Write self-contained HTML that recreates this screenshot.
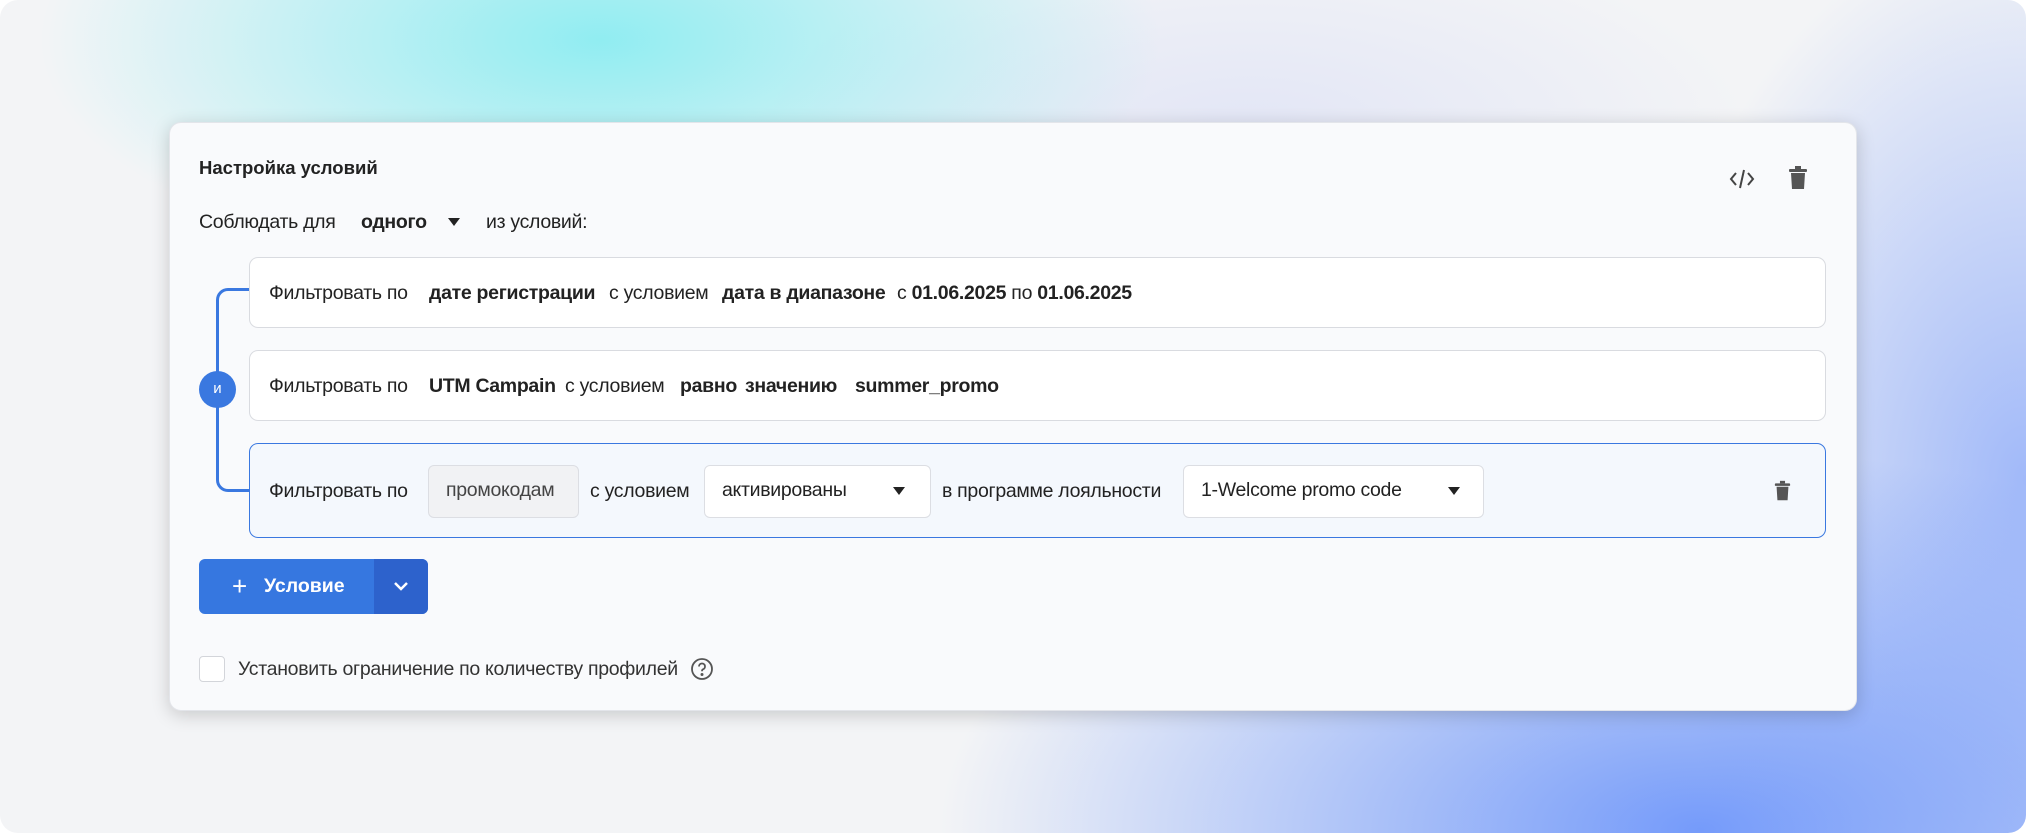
<!DOCTYPE html>
<html><head><meta charset="utf-8"><style>
*{box-sizing:border-box;margin:0;padding:0}
body{width:2026px;height:833px;overflow:hidden;background:#fff;font-family:"Liberation Sans",sans-serif;color:#222;position:relative}
.bg{position:absolute;left:0;top:0;width:2026px;height:833px;border-radius:18px;overflow:hidden;
background:
radial-gradient(ellipse 560px 240px at 600px 40px,rgba(120,235,240,.8),rgba(120,235,240,0) 100%),
radial-gradient(ellipse 760px 380px at 1700px 830px,rgba(110,150,250,.95),rgba(110,150,250,0) 100%),
radial-gradient(ellipse 380px 560px at 2026px 480px,rgba(140,170,250,.8),rgba(140,170,250,0) 100%),
radial-gradient(ellipse 500px 200px at 1250px 130px,rgba(215,220,245,.6),rgba(215,220,245,0) 100%),
#f3f4f6}
.card{position:absolute;left:169px;top:122px;width:1688px;height:589px;background:#f9fafc;border-radius:12px;box-shadow:0 4px 18px rgba(0,0,0,.18);border:1px solid #e3e5ea}
.abs{position:absolute;white-space:nowrap}
.t{font-size:19.5px;line-height:24px;letter-spacing:-0.3px}
b{font-weight:700}
.row{position:absolute;left:249px;width:1577px;background:#fff;border:1.5px solid #d9dbe0;border-radius:9px}
.box{position:absolute;border:1.5px solid #dcdee3;border-radius:6px;background:#fff;font-size:19.5px;line-height:49px;padding-left:17px;letter-spacing:-0.3px}
.tri{position:absolute;width:0;height:0;border-left:6px solid transparent;border-right:6px solid transparent;border-top:8px solid #222}
</style></head><body>
<div class="bg"></div>
<div class="card"></div>
<div class="abs" style="left:199px;top:156px;font-weight:700;font-size:18.5px;line-height:24px">Настройка условий</div>
<svg class="abs" style="left:1728px;top:166px" width="28" height="26" viewBox="0 0 28 26" fill="none" stroke="#444" stroke-width="2"><path d="M8 7 3 13l5 6M20 7l5 6-5 6M16 4l-4 18"/></svg>
<svg class="abs" style="left:1788px;top:165px" width="20" height="26" viewBox="0 0 20 26" fill="#555"><rect x="1" y="4" width="18" height="3" rx="1"/><rect x="7" y="1" width="6" height="3"/><path d="M3 8h14l-1 16H4z"/></svg>
<div class="abs t" style="left:199px;top:210px">Соблюдать для</div>
<div class="abs t" style="left:361px;top:210px;font-weight:700">одного</div>
<div class="tri" style="left:448px;top:218px"></div>
<div class="abs t" style="left:486px;top:210px">из условий:</div>

<div class="abs" style="left:216px;top:288px;width:34px;height:204px;border:3px solid #3a78e0;border-right:none;border-radius:12px 0 0 12px"></div>
<div class="abs" style="left:199px;top:371px;width:37px;height:37px;border-radius:50%;background:#3a78e0;color:#fff;font-size:15px;text-align:center;line-height:36px">и</div>

<div class="row" style="top:257px;height:71px"></div>
<div class="abs t" style="left:269px;top:281px">Фильтровать по</div>
<div class="abs t" style="left:429px;top:281px"><b>дате регистрации</b></div>
<div class="abs t" style="left:609px;top:281px">с условием</div>
<div class="abs t" style="left:722px;top:281px"><b>дата в диапазоне</b></div>
<div class="abs t" style="left:897px;top:281px">с <b>01.06.2025</b> по <b>01.06.2025</b></div>

<div class="row" style="top:350px;height:71px"></div>
<div class="abs t" style="left:269px;top:374px">Фильтровать по</div>
<div class="abs t" style="left:429px;top:374px"><b>UTM Campain</b></div>
<div class="abs t" style="left:565px;top:374px">с условием</div>
<div class="abs t" style="left:680px;top:374px"><b>равно</b></div>
<div class="abs t" style="left:745px;top:374px"><b>значению</b></div>
<div class="abs t" style="left:855px;top:374px"><b>summer_promo</b></div>

<div class="row" style="top:443px;height:95px;background:#f4f8fd;border-color:#3a78e0"></div>
<div class="abs t" style="left:269px;top:479px">Фильтровать по</div>
<div class="box" style="left:428px;top:465px;width:151px;height:53px;background:#f1f2f4;color:#444">промокодам</div>
<div class="abs t" style="left:590px;top:479px">с условием</div>
<div class="box" style="left:704px;top:465px;width:227px;height:53px">активированы</div>
<div class="tri" style="left:893px;top:487px"></div>
<div class="abs t" style="left:942px;top:479px">в программе лояльности</div>
<div class="box" style="left:1183px;top:465px;width:301px;height:53px">1-Welcome promo code</div>
<div class="tri" style="left:1448px;top:487px"></div>
<svg class="abs" style="left:1774px;top:480px" width="17" height="22" viewBox="0 0 20 26" fill="#555"><rect x="1" y="4" width="18" height="3" rx="1"/><rect x="7" y="1" width="6" height="3"/><path d="M3 8h14l-1 16H4z"/></svg>

<div class="abs" style="left:199px;top:559px;width:229px;height:55px;border-radius:6px;background:#3677e0;overflow:hidden">
<div style="position:absolute;left:175px;top:0;width:54px;height:55px;background:#2d62cc"></div>
<div style="position:absolute;left:33px;top:14px;color:#fff;font-size:26px;line-height:26px">+</div>
<div style="position:absolute;left:65px;top:16px;color:#fff;font-size:19.5px;font-weight:700;line-height:22px">Условие</div>
<svg style="position:absolute;left:193px;top:21px" width="18" height="12" viewBox="0 0 18 12" fill="none" stroke="#fff" stroke-width="2.5"><path d="M3 3l6 6 6-6"/></svg>
</div>

<div class="abs" style="left:199px;top:656px;width:26px;height:26px;border:1.5px solid #d3d5da;border-radius:4px;background:#fff"></div>
<div class="abs t" style="left:238px;top:657px;color:#333">Установить ограничение по количеству профилей</div>
<svg class="abs" style="left:690px;top:657px" width="24" height="24" viewBox="0 0 24 24" fill="none" stroke="#555" stroke-width="1.8"><circle cx="12" cy="12" r="10"/><path d="M9 9.5a3 3 0 1 1 4 2.8c-.8.4-1 1-1 1.9"/><circle cx="12" cy="17.5" r=".6" fill="#555"/></svg>
</body></html>
